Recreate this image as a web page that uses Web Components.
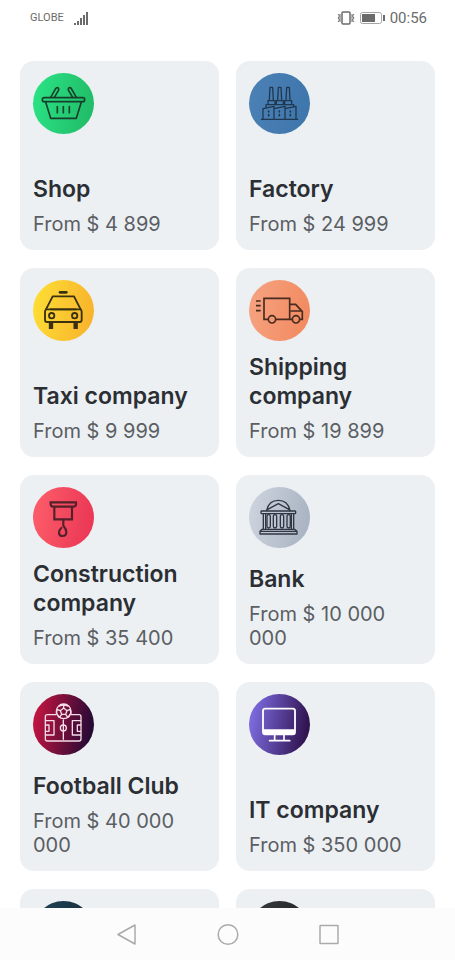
<!DOCTYPE html>
<html lang="en">
<head>
<meta charset="utf-8">
<meta name="viewport" content="width=device-width, initial-scale=1">
<title>Companies</title>
<style>
body { margin: 0; background: #fff; font-family: Inter, "Noto Sans", sans-serif; }
</style>
</head>
<body>
<business-app></business-app>

<script>
const define = (name, html, setup) => {
  const template = document.createElement('template');
  template.innerHTML = html;
  customElements.define(name, class extends HTMLElement {
    constructor() {
      super();
      this.attachShadow({ mode: 'open' }).append(template.content.cloneNode(true));
    }
    connectedCallback() { if (setup) setup(this, this.shadowRoot); }
  });
};

/* Each icon: viewBox, gradient stops, line colour, drawing */
const ICONS = {
  shop: ['24 24 183 183', '#2ae083', '#21bd69', '#173f2b', `
    <g stroke-width="5"><rect x="52" y="98" width="127" height="12" rx="6"/>
    <path d="M62 111l15 49h77l15-49M97 125v18M115 125v18M133 125v18"/>
    <path d="M77 97l15-26q3-5 8-2 3 3 0 8L88 97M154 97l-15-26q-3-5-8-2-3 3 0 8l12 20"/></g>`],
  factory: ['27 24 183 183', '#4a80b4', '#3f76ac', '#20384f', `
    <g stroke-width="4"><path d="M64 163h109M69 162v-31l33-7v38M102 131l33-7v38M135 131l33-7v38"/>
    <path d="M88 105l2-38h8l2 38M113 105l2-38h8l2 38M138 105l2-38h8l2 38"/>
    <path d="M84 118v-11h21v11M109 118v-11h21v11M134 118v-11h21v11M78 127v-8h83v6"/>
    <path d="M86 138v3M86 149v3M118 138v3M118 149v3M151 138v3M151 149v3" stroke-width="5"/></g>`],
  taxi: ['24 24 183 183', '#fddb35', '#f8b52c', '#38300f', `
    <g stroke-width="5.5"><path d="M63 112l20-39h64l20 39M77 112h76"/>
    <path d="M63 112q-3 3-3 7v25q0 6 6 6h98q6 0 6-6v-25q0-4-3-7zM68 112h94"/>
    <circle cx="80" cy="131" r="8"/><circle cx="149" cy="131" r="8"/></g>
    <path d="M105 61h19" stroke-width="8"/><path d="M78 153v18M152 153v18" stroke-width="13" stroke-linecap="butt"/>`],
  shipping: ['27 24 183 183', '#f5a17e', '#f28b61', '#482b20', `
    <g stroke-width="5" stroke-linejoin="miter"><path d="M84 142H72V79h77v63h-42M149 97h18l20 22v23h-7M157 142h-8M154 117h31"/>
    <circle cx="96" cy="142" r="11"/><circle cx="168" cy="142" r="11"/><path d="M48 87h14M48 101h14M48 116h14" stroke-linecap="butt"/></g>`],
  construction: ['24 21 183 183', '#fb5b68', '#eb3856', '#54202a', `
    <g stroke-width="6.5" stroke-linejoin="miter"><path d="M77 67h76v6q0 7-8 7H85q-8 0-8-7zM88 82v36h53V82"/>
    <path d="M115 119v18q9 9 9 20 0 11-11 11t-11-10q0-8 7-14"/></g>`],
  bank: ['27 21 183 183', '#cbd2dc', '#aab4c3', '#303743', `
    <g stroke-width="4"><rect x="63" y="93" width="104" height="8" rx="2"/>
    <path d="M80 92q6-31 35-31 29 0 35 31M82 89l33-18 33 18"/>
    <path d="M60 162v-8l6-6h98l7 6v8zM62 154h107"/>
    <path d="M70 103v43M77 103v43M154 103v43M161 103v43"/>
    <rect x="81" y="104" width="10" height="40" rx="5"/><rect x="100" y="104" width="10" height="40" rx="5"/><rect x="121" y="104" width="10" height="40" rx="5"/><rect x="141" y="104" width="10" height="40" rx="5"/></g>`],
  football: ['24 21 183 183', '#bd1440', '#260a35', '#f5dce6', `
    <g stroke-width="4"><path d="M92 83H67q-6 0-6 6v67q0 6 6 6h95q6 0 6-6V89q0-6-6-6h-23"/>
    <path d="M62 101h25v43H62M62 114h10v19H62M167 101h-25v43h25M167 114h-10v19h10M115 99v58"/><circle cx="115" cy="123" r="9"/>
    <circle cx="116" cy="73" r="22"/><path d="M116 63l10 8-4 11h-12l-4-11zM116 63V55M126 71l10-4M122 82l6 8M110 82l-6 8M106 71l-10-4M103 57l13-4 13 4M96 69l-2 10 8 11M136 69l2 10-8 11"/></g>`],
  it: ['27 21 183 183', '#7b69dc', '#30134f', '#fff', `
    <g stroke-width="5.5"><rect x="69" y="65" width="96" height="77" rx="7"/><path d="M104 143v16M132 143v16" stroke-width="5"/><path d="M89 161h60"/></g>
    <path d="M69 127h96v9q0 6-6 6H75q-6 0-6-6z" fill="#fff" stroke="none"/>`],
  teal: ['0 0 183 183', '#1f4353', '#182d3c', '#fff', ''],
  dark: ['0 0 183 183', '#38393c', '#242528', '#fff', '']
};

define('company-icon', `
  <style>
    :host { display: block; width: 61px; height: 61px; border-radius: 50%; overflow: hidden;
      background: linear-gradient(100deg, var(--from) 10%, var(--to) 90%); }
    svg { display: block; width: 100%; height: 100%; fill: none; stroke-linecap: round; stroke-linejoin: round; }
  </style>
  <svg aria-hidden="true"></svg>`, (host, root) => {
  const [box, from, to, line, art] = ICONS[host.getAttribute('name')];
  host.style.setProperty('--from', from);
  host.style.setProperty('--to', to);
  const svg = root.querySelector('svg');
  svg.setAttribute('viewBox', box);
  svg.setAttribute('stroke', line);
  svg.innerHTML = art;
});

define('company-card', `
  <style>
    :host { display: grid; }
    button { display: flex; flex-direction: column; align-items: flex-start; box-sizing: border-box;
      min-height: 189px; min-width: 0; margin: 0; padding: 12px 13px 14px; border: 0; border-radius: 14px;
      background: #ecf0f3; font: inherit; text-align: left; cursor: pointer; }
    .title { margin-top: auto; color: #2b2e33; font-size: 23px; line-height: 29px; font-weight: 600; }
    .price { margin-top: 8px; color: #5b5e63; font-size: 20px; line-height: 24px; }
  </style>
  <button type="button">
    <slot name="icon"></slot>
    <span class="title"><slot></slot></span>
    <span class="price"><slot name="price"></slot></span>
  </button>`);

define('status-bar', `
  <style>
    :host { display: flex; align-items: center; justify-content: space-between; height: 35px;
      padding: 0 28px 0 30px; color: #6b6b6b; font-family: Roboto, sans-serif; }
    div { display: flex; align-items: center; }
    .left { gap: 10px; font-size: 11px; }
    .right { gap: 5px; font-size: 15px; }
    svg { display: block; fill: none; stroke: currentColor; }
  </style>
  <div class="left"><span>GLOBE</span>
    <svg width="15" height="14" viewBox="0 0 15 14" stroke-width="2"><path d="M1 14v-2M4 14v-4M7 14V7M10 14V4M13 14V1"/></svg>
  </div>
  <div class="right">
    <svg width="18" height="14" viewBox="0 0 18 14"><rect x="5" y="1" width="8" height="12" rx="1" stroke-width="1.5"/><path d="M1 3l1.500 2L1 7l1.500 2L1 11M3 3v8M17 3l-1.500 2L17 7l-1.500 2 1.500 2M15 3v8"/></svg>
    <svg width="25" height="12" viewBox="0 0 25 12"><rect x=".5" y=".5" width="21" height="11" rx="2" stroke="#a5a5a5"/><path d="M2 2h13v8H2z" fill="currentColor" stroke="none"/><path d="M24 3v6" stroke-width="2"/></svg>
    <span>00:56</span>
  </div>`);

define('system-nav', `
  <style>
    :host { display: flex; justify-content: center; align-items: center; gap: 53px; height: 52px; background: #fcfcfc; }
    button { display: grid; place-items: center; width: 48px; height: 48px; margin: 0; padding: 0; border: 0; background: none; cursor: pointer; }
    svg { display: block; width: 24px; height: 24px; fill: none; stroke: #aaa; stroke-width: 1.5; stroke-linejoin: round; }
  </style>
  <button type="button" aria-label="Back"><svg viewBox="0 0 24 24"><path d="M3 12.500L20 3v19z"/></svg></button>
  <button type="button" aria-label="Home"><svg viewBox="0 0 24 24"><circle cx="12" cy="12.500" r="9.800"/></svg></button>
  <button type="button" aria-label="Recent apps"><svg viewBox="0 0 24 24"><rect x="3" y="3.500" width="18" height="18" rx=".5"/></svg></button>`);

define('business-app', `
  <style>
    :host { display: grid; grid-template-rows: auto minmax(0, 1fr) auto; height: 100vh; }
    main { overflow: hidden; padding: 26px 20px 0; }
    .cards { display: grid; grid-template-columns: repeat(2, minmax(0, 1fr)); gap: 18px 17px; }
  </style>
  <status-bar></status-bar>
  <main><div class="cards">
    <company-card><company-icon slot="icon" name="shop"></company-icon>Shop<span slot="price">From $ 4 899</span></company-card>
    <company-card><company-icon slot="icon" name="factory"></company-icon>Factory<span slot="price">From $ 24 999</span></company-card>
    <company-card><company-icon slot="icon" name="taxi"></company-icon>Taxi company<span slot="price">From $ 9 999</span></company-card>
    <company-card><company-icon slot="icon" name="shipping"></company-icon>Shipping company<span slot="price">From $ 19 899</span></company-card>
    <company-card><company-icon slot="icon" name="construction"></company-icon>Construction company<span slot="price">From $ 35 400</span></company-card>
    <company-card><company-icon slot="icon" name="bank"></company-icon>Bank<span slot="price">From $ 10 000 000</span></company-card>
    <company-card><company-icon slot="icon" name="football"></company-icon>Football Club<span slot="price">From $ 40 000 000</span></company-card>
    <company-card><company-icon slot="icon" name="it"></company-icon>IT company<span slot="price">From $ 350 000</span></company-card>
    <company-card><company-icon slot="icon" name="teal"></company-icon></company-card>
    <company-card><company-icon slot="icon" name="dark"></company-icon></company-card>
  </div></main>
  <system-nav></system-nav>`);
</script>
</body>
</html>
